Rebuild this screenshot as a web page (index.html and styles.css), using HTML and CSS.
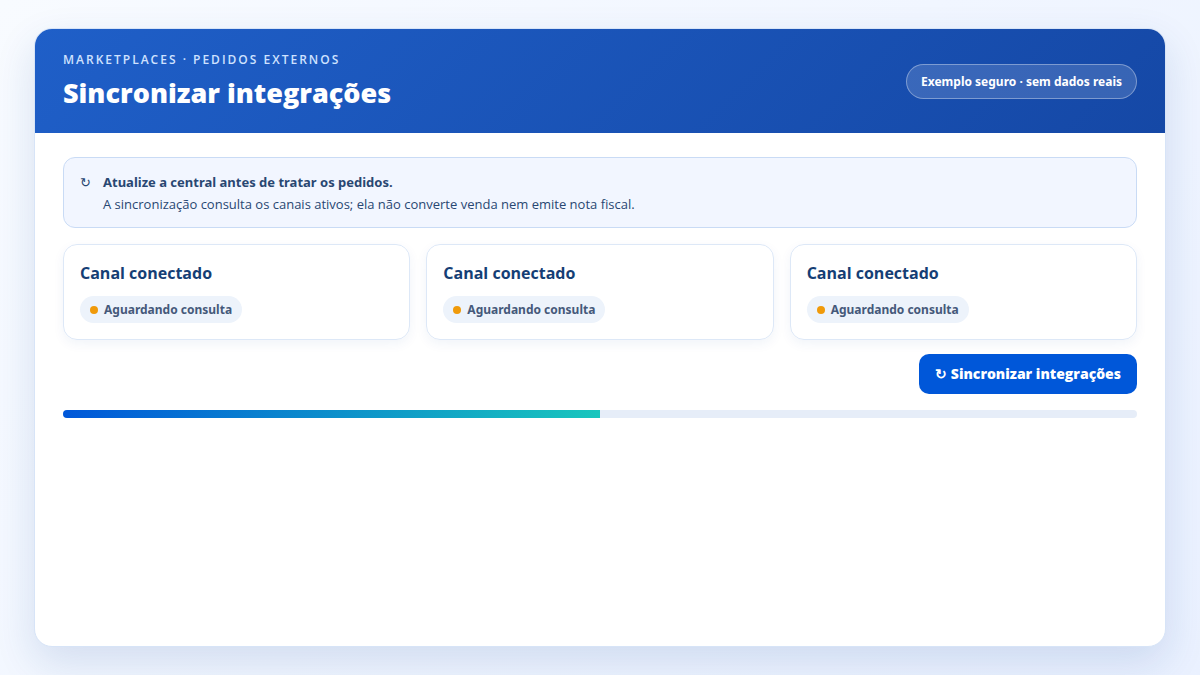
FILE: index.html
```html
<!DOCTYPE html>
<html lang="pt-BR">
<head>
    <meta charset="UTF-8">
    <meta name="viewport" content="width=device-width, initial-scale=1.0">
    <title>Sincronizar integrações</title>
    <link rel="stylesheet" href="styles.css">
</head>
<body>

<main class="window">
    <header class="header">
        <div>
            <div class="eyebrow">Marketplaces · Pedidos externos</div>
            <h1>Sincronizar integrações</h1>
        </div>
        <span class="badge">Exemplo seguro · sem dados reais</span>
    </header>

    <div class="content">
        <div class="notice">
            <span class="notice-icon">↻</span>
            <div>
                <strong>Atualize a central antes de tratar os pedidos.</strong>
                <p>A sincronização consulta os canais ativos; ela não converte venda nem emite nota fiscal.</p>
            </div>
        </div>

        <div class="cards">
            <section class="card">
                <h2>Canal conectado</h2>
                <span class="status">Aguardando consulta</span>
            </section>
            <section class="card">
                <h2>Canal conectado</h2>
                <span class="status">Aguardando consulta</span>
            </section>
            <section class="card">
                <h2>Canal conectado</h2>
                <span class="status">Aguardando consulta</span>
            </section>
        </div>

        <div class="actions">
            <button type="button" class="sync-button">↻ Sincronizar integrações</button>
        </div>

        <div class="progress" role="progressbar" aria-label="Sincronização" aria-valuemin="0" aria-valuemax="100" aria-valuenow="50">
            <div class="progress-bar" style="width: 50%"></div>
        </div>
    </div>
</main>

</body>
</html>
```
FILE: styles.css
```css
* {
    box-sizing: border-box;
}

body {
    margin: 0;
    min-height: 100vh;
    padding: 28px 34px;
    display: flex;
    background: linear-gradient(135deg, #f8fbff, #eaf1ff);
    color: #153e75;
    font-family: "Open Sans", "Noto Sans", sans-serif;
    font-size: 14px;
}

h1, h2, p {
    margin: 0;
}

.window {
    flex: 1;
    min-width: 0;
    background: #fff;
    border: 1px solid #d7e4f7;
    border-radius: 18px;
    overflow: hidden;
    box-shadow: 0 16px 40px rgba(21, 70, 150, 0.14);
}

.header {
    display: flex;
    justify-content: space-between;
    align-items: center;
    padding: 20px 28px;
    background: linear-gradient(135deg, #1f5fc8, #1548a6);
    color: #fff;
}

.eyebrow {
    color: #cfe2ff;
    font-size: 12px;
    line-height: 22px;
    font-weight: 600;
    letter-spacing: 2px;
    text-transform: uppercase;
}

h1 {
    margin-top: 2px;
    font-size: 27px;
    line-height: 40px;
    font-weight: 800;
}

.badge {
    padding: 8px 14px;
    border: 1px solid rgba(255, 255, 255, 0.35);
    border-radius: 999px;
    background: rgba(255, 255, 255, 0.15);
    font-family: "Noto Sans", sans-serif;
    font-size: 12px;
    line-height: 17px;
    font-weight: 700;
}

.content {
    padding: 24px 28px;
}

.notice {
    display: flex;
    gap: 12px;
    padding: 14px 16px;
    border: 1px solid #c9dbf5;
    border-radius: 12px;
    background: #f2f6ff;
    color: #294772;
    font-size: 13px;
    line-height: 20px;
}

.notice strong {
    display: block;
    margin-bottom: 3px;
    font-family: "Noto Sans", sans-serif;
}

.notice p {
    line-height: 18px;
}

.cards {
    display: grid;
    grid-template-columns: repeat(3, 1fr);
    gap: 16px;
    margin-top: 16px;
}

.card {
    padding: 16px;
    border: 1px solid #dde8f7;
    border-radius: 14px;
    box-shadow: 0 4px 12px rgba(21, 70, 150, 0.06);
}

h2 {
    margin-bottom: 11px;
    font-size: 16px;
    line-height: 24px;
    font-weight: 700;
}

.status {
    display: inline-flex;
    align-items: center;
    gap: 6px;
    padding: 5px 10px;
    border-radius: 999px;
    background: #edf3fb;
    color: #45597a;
    font-family: "Noto Sans", sans-serif;
    font-size: 12px;
    line-height: 17px;
    font-weight: 700;
}

.status::before {
    content: "";
    width: 8px;
    height: 8px;
    border-radius: 50%;
    background: #f09a0a;
}

.actions {
    display: flex;
    justify-content: flex-end;
    margin-top: 14px;
}

.sync-button {
    padding: 10px 16px;
    border: 0;
    border-radius: 10px;
    background: #0057d9;
    color: #fff;
    font-family: inherit;
    font-size: 14px;
    line-height: 20px;
    font-weight: 800;
    cursor: pointer;
}

.progress {
    height: 8px;
    margin-top: 16px;
    border-radius: 999px;
    background: #e6edf8;
    overflow: hidden;
}

.progress-bar {
    height: 100%;
    background: linear-gradient(90deg, #0057d9, #19c6bd);
}
```
